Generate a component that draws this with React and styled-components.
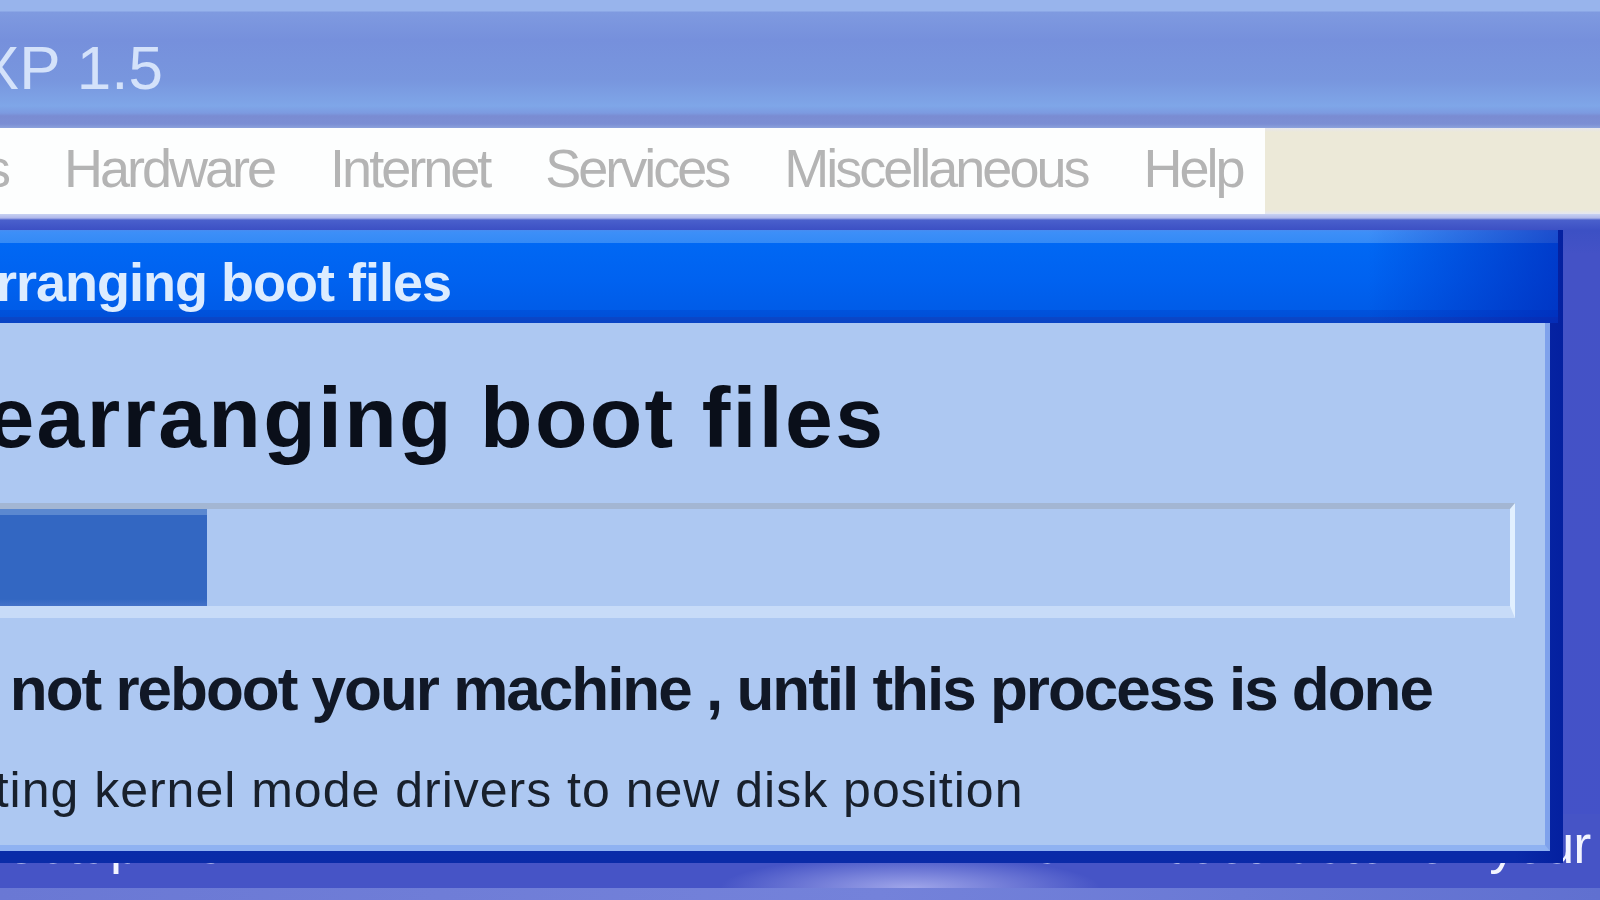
import React from "react";
import styled, { createGlobalStyle, css } from "styled-components";

const GlobalStyle = createGlobalStyle`
  html, body {
    margin: 0;
    padding: 0;
    width: 1600px;
    height: 900px;
    overflow: hidden;
    background: #4452c8;
  }
  body {
    font-family: "Liberation Sans", Arial, sans-serif;
  }
  #root {
    width: 1600px;
    height: 900px;
  }
`;

const FONT = `"Liberation Sans", Arial, sans-serif`;

const Screen = styled.div`
  width: 1600px;
  height: 900px;
  overflow: hidden;
  display: flex;
  flex-direction: column;
  background: #4452c8;
`;

const MainTitleBar = styled.div`
  flex: 0 0 128px;
  box-sizing: border-box;
  padding-top: 18px;
  overflow: hidden;
  background: linear-gradient(
    to bottom,
    #98b4ec 0,
    #98b4ec 11px,
    #7f9ae0 12px,
    #7690dc 40px,
    #7896de 80px,
    #7fa6e8 106px,
    #7c9ae0 113px,
    #7a8cd2 116px,
    #7b8ed4 124px,
    #8ca2dc 128px
  );
`;

const AppTitle = styled.h1`
  margin: 0 0 0 -22px;
  font: 400 62px/100px ${FONT};
  color: #d4e2fa;
  white-space: nowrap;
`;

const MenuRow = styled.div`
  flex: 0 0 86px;
  display: flex;
`;

const MenuBar = styled.nav`
  flex: 0 0 1265px;
  display: flex;
  gap: 56px;
  overflow: hidden;
  background: #fdfefe;
`;

const MenuItem = styled.span`
  font: 400 54px/80px ${FONT};
  letter-spacing: -3px;
  color: #b4b4b4;
  white-space: nowrap;
  ${(p) =>
    p.$lead &&
    css`
      margin-left: ${p.$lead}px;
    `}
`;

const MenuFiller = styled.div`
  flex: 1;
  background: linear-gradient(to bottom, #e6e6ee 0, #ece9d8 4px, #ece9d8 82px, #e4e6f2 86px);
`;

const ClientArea = styled.main`
  flex: 1;
  position: relative;
  display: flex;
  flex-direction: column;
  justify-content: flex-end;
  background: linear-gradient(
    to bottom,
    #c8d2f2 0,
    #b0b8ea 4px,
    #4a60cc 6px,
    #3c50c4 16px,
    #4452c6 40px,
    #4452c8 100%
  );
`;

const StatusBar = styled.footer`
  height: 74px;
  display: grid;
  grid-template-columns: 962px auto;
  overflow: hidden;
  background:
    radial-gradient(ellipse 190px 32px at 910px 100%, rgba(175, 180, 240, 0.85), rgba(175, 180, 240, 0) 100%),
    #4654c6;
`;

const StatusText = styled.span`
  font: 400 54px/60px ${FONT};
  letter-spacing: -1px;
  color: #f2f4ff;
  white-space: nowrap;
  ${(p) =>
    p.$pad &&
    css`
      padding-left: ${p.$pad}px;
    `}
`;

const BottomStrip = styled.div`
  flex: 0 0 12px;
  background: linear-gradient(to right, #6a78d4 0, #7482da 55%, #6070d0 100%);
`;

const Dialog = styled.section`
  position: absolute;
  left: -30px;
  top: 16px;
  width: 1593px;
  height: 633px;
  box-sizing: border-box;
  padding: 0 5px 12px 0;
  display: flex;
  flex-direction: column;
  background: linear-gradient(to right, #0a2ca8 0, #0a2aa8 97%, #0420a0 100%);
`;

const DialogTitle = styled.header`
  flex: 0 0 93px;
  box-sizing: border-box;
  padding: 12px 0 0 30px;
  overflow: hidden;
  background:
    linear-gradient(to right, rgba(0, 20, 170, 0) 88%, rgba(0, 24, 170, 0.55) 100%),
    linear-gradient(
      to bottom,
      #4a8cf0 0,
      #3d8ff8 2px,
      #348af6 13px,
      #0068f4 13px,
      #0062f0 50px,
      #005ce8 80px,
      #0052dc 80px,
      #0050d8 87px,
      #0a46c8 87px,
      #0a44c4 93px
    );
`;

const DialogTitleText = styled.h2`
  margin: 0 0 0 -100px;
  font: 700 54px/80px ${FONT};
  letter-spacing: -1px;
  color: #dcecff;
  white-space: nowrap;
`;

const DialogBody = styled.div`
  flex: 1;
  min-height: 0;
  margin-right: 8px;
  box-sizing: border-box;
  padding: 44px 30px 0 30px;
  display: flex;
  flex-direction: column;
  gap: 36px;
  overflow: hidden;
  background: #adc8f2;
  border-right: 5px solid #7fa2ec;
  border-bottom: 6px solid #8fb2f2;
`;

const Heading = styled.h3`
  margin: 0 0 0 -78px;
  font: 700 86px/100px ${FONT};
  letter-spacing: 2.3px;
  color: #0a0f1a;
  white-space: nowrap;
`;

const ProgressTrack = styled.div`
  flex: 0 0 115px;
  margin-left: -30px;
  box-sizing: border-box;
  display: flex;
  background: #adc8f2;
  border-top: 6px solid #a3b6d3;
  border-right: 5px solid #e2f0ff;
  border-bottom: 12px solid #c7dbf8;
`;

const ProgressFill = styled.div`
  height: 100%;
  background: linear-gradient(
    to bottom,
    #5b88d0 0,
    #5b88d0 6px,
    #3367c2 6px,
    #3367c2 90px,
    #4472c8 100%
  );
`;

const Warning = styled.p`
  margin: 0 0 0 -84px;
  font: 700 62px/70px ${FONT};
  letter-spacing: -2px;
  color: #111826;
  white-space: nowrap;
`;

const StepText = styled.p`
  margin: 0 0 0 -167px;
  font: 400 50px/60px ${FONT};
  letter-spacing: 1px;
  color: #18202c;
  white-space: nowrap;
`;

const menuItems = ["Hardware", "Internet", "Services", "Miscellaneous", "Help"];

export default function App() {
  const progress = 15.4;
  return (
    <>
      <GlobalStyle />
      <Screen>
        <MainTitleBar>
          <AppTitle>XP 1.5</AppTitle>
        </MainTitleBar>
        <MenuRow>
          <MenuBar>
            <MenuItem $lead={-16}>s</MenuItem>
            {menuItems.map((m) => (
              <MenuItem key={m}>{m}</MenuItem>
            ))}
          </MenuBar>
          <MenuFiller />
        </MenuRow>
        <ClientArea>
          <StatusBar>
            <StatusText $pad={3}>Setup 1.5</StatusText>
            <StatusText>This will boot faster on your</StatusText>
          </StatusBar>
          <Dialog>
            <DialogTitle>
              <DialogTitleText>Rearranging boot files</DialogTitleText>
            </DialogTitle>
            <DialogBody>
              <Heading>Rearranging boot files</Heading>
              <ProgressTrack>
                <ProgressFill style={{ width: `${progress}%` }} />
              </ProgressTrack>
              <Warning>Do not reboot your machine , until this process is done</Warning>
              <StepText>Relocating kernel mode drivers to new disk position</StepText>
            </DialogBody>
          </Dialog>
        </ClientArea>
        <BottomStrip />
      </Screen>
    </>
  );
}
